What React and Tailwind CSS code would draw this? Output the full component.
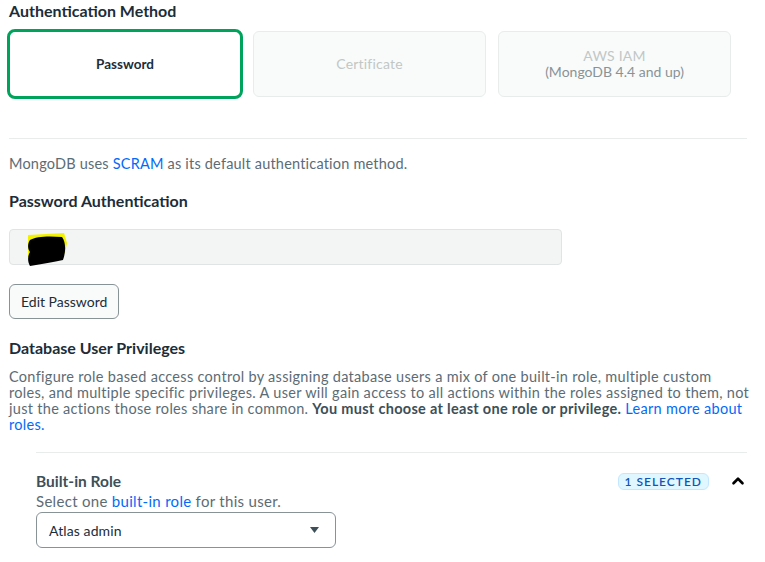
import { ChevronUp } from 'lucide-react';

const FONT = "font-['Lato','Open_Sans',sans-serif]";

function MethodCard({ selected, title, sub }) {
  if (selected) {
    return (
      <div className="flex h-[70px] w-[236px] items-center justify-center rounded-lg border-[3px] border-[#00a35c] bg-white">
        <span className="text-[13.5px] font-bold text-[#1c2d38]">{title}</span>
      </div>
    );
  }
  return (
    <div className="flex h-[66px] w-[233px] flex-col items-center justify-center rounded-md border border-[#e8edeb] bg-[#f9fbfa] leading-[16px]">
      <span className="text-[14px] tracking-[0.2px] text-[#c1c7c6]">{title}</span>
      {sub && <span className="text-[14px] text-[#889397]">{sub}</span>}
    </div>
  );
}

export default function App() {
  return (
    <div className={`${FONT} h-[562px] w-[765px] overflow-hidden bg-white pl-[9px] pr-[18px] text-[#1c2d38]`}>
      <h2 className="pt-[1px] text-[16px] font-bold leading-[20px] text-[#1c2d38]">Authentication Method</h2>

      <div className="-ml-[2px] mt-[8px] flex items-center">
        <MethodCard selected title="Password" />
        <div className="ml-[10px]">
          <MethodCard title="Certificate" />
        </div>
        <div className="ml-[12px]">
          <MethodCard title="AWS IAM" sub="(MongoDB 4.4 and up)" />
        </div>
      </div>

      <div className="mt-[39px] border-t border-[#e8edeb]" />

      <p className="mt-[16px] text-[14.5px] leading-[18px] tracking-[0.2px] text-[#5c6c75]">
        MongoDB uses <a className="text-[#016bf8]">SCRAM</a> as its default authentication method.
      </p>

      <h3 className="mt-[18px] text-[16px] font-bold leading-[20px] text-[#1c2d38]">Password Authentication</h3>

      <div className="relative mt-[18px] h-[36px] w-[553px] rounded border border-[#e1e4e4] bg-[#f3f5f4]">
        <svg className="absolute left-[8px] top-[1px]" width="52" height="36" viewBox="0 0 52 36">
          <path d="M10 4 L46 2 L49 12 L47 22 L38 30 L24 30 L10 26 Z" fill="#f2f200" />
          <path d="M12 9 C18 5 32 5 44 6 C48 11 48 21 45 29 C36 31 24 33 12 35 C9 30 10 24 12 21 C9 17 10 12 12 9 Z" fill="#000" />
        </svg>
      </div>

      <button className="mt-[19px] h-[35px] rounded-md border border-[#889397] bg-[#f9fbfa] px-[11px] text-[14px] text-[#1c2d38]">
        Edit Password
      </button>

      <h3 className="mt-[19px] text-[16px] font-bold leading-[20px] text-[#1c2d38]">Database User Privileges</h3>

      <p className="mt-[11px] whitespace-nowrap text-[14.5px] leading-[16px] tracking-[0.3px] text-[#5c6c75]">
        Configure role based access control by assigning database users a mix of one built-in role, multiple custom
        <br />
        roles, and multiple specific privileges. A user will gain access to all actions within the roles assigned to them, not
        <br />
        just the actions those roles share in common. <b className="text-[#3d4f58]">You must choose at least one role or privilege.</b>{' '}
        <a className="text-[#016bf8]">Learn more about</a>
        <br />
        <a className="text-[#016bf8]">roles.</a>
      </p>

      <div className="ml-[27px] mt-[19px] border-t border-[#e8edeb]">
        <div className="mt-[19px] flex items-center justify-between">
          <span className="text-[15.5px] font-bold leading-[18px] text-[#3d4f58]">Built-in Role</span>
          <div className="flex items-center">
            <span className="rounded-md border border-[#c3e7fe] bg-[#e1f7ff] px-[6px] text-[12px] font-semibold leading-[15px] tracking-[1px] text-[#1254b7]">
              1 SELECTED
            </span>
            <ChevronUp className="ml-[20px] h-[18px] w-[18px] text-black" strokeWidth={3.5} />
          </div>
        </div>
        <p className="mt-[3px] text-[15px] leading-[16px] tracking-[0.3px] text-[#5c6c75]">
          Select one <a className="text-[#016bf8]">built-in role</a> for this user.
        </p>
        <div className="mt-[3px] flex h-[36px] w-[300px] items-center justify-between rounded-md border border-[#889397] bg-white pl-[12px] pr-[16px]">
          <span className="text-[14px] tracking-[0.1px] text-[#1c2d38]">Atlas admin</span>
          <svg width="9" height="6" viewBox="0 0 9 6">
            <path d="M0 0 H9 L4.5 6 Z" fill="#3d4f58" />
          </svg>
        </div>
      </div>
    </div>
  );
}
